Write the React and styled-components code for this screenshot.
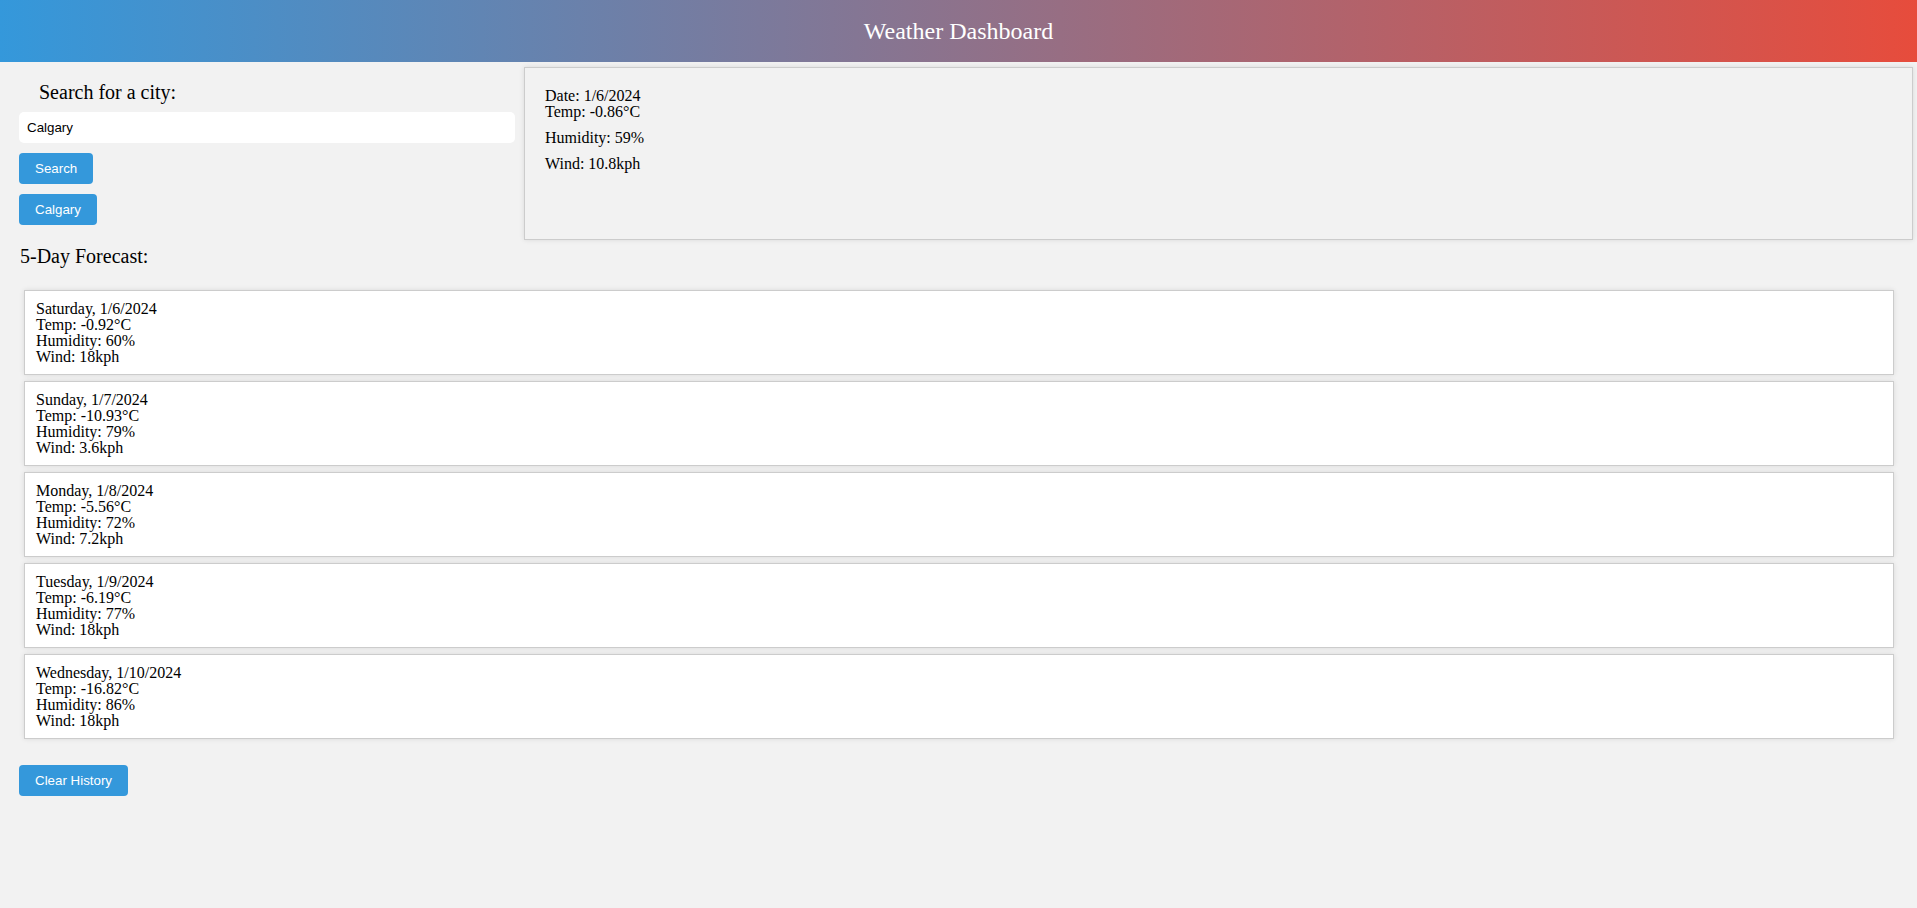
import React from "react";
import styled, { createGlobalStyle } from "styled-components";

const Global = createGlobalStyle`
  html, body {
    margin: 0;
    padding: 0;
    background: #f2f2f2;
    font-family: "Liberation Serif", "Times New Roman", serif;
    color: #000;
  }
  * { box-sizing: border-box; }
`;

const Header = styled.header`
  height: 62px;
  display: flex;
  align-items: center;
  justify-content: center;
  background: linear-gradient(to right, #3498db, #e74c3c);
`;

const Title = styled.h1`
  margin: 0;
  font-size: 24px;
  font-weight: normal;
  color: #fff;
  line-height: 28px;
`;

const Main = styled.main`
  padding: 5px 4px 0 19px;
`;

const TopRow = styled.div`
  display: flex;
  gap: 9px;
  align-items: flex-start;
`;

const SearchColumn = styled.section`
  width: 496px;
  display: flex;
  flex-direction: column;
  align-items: flex-start;
`;

const SearchLabel = styled.label`
  display: block;
  margin: 14px 0 8px 20px;
  font-size: 20px;
  line-height: 23px;
`;

const CityInput = styled.input`
  width: 100%;
  height: 31px;
  border: none;
  border-radius: 5px;
  background: #fff;
  padding: 8px;
  font-family: "Liberation Sans", Arial, sans-serif;
  font-size: 13.33px;
  line-height: 15px;
  color: #000;
  outline: none;
`;

const ActionButton = styled.button`
  margin-top: ${(p) => p.$top ?? 10}px;
  height: 31px;
  padding: 0 16px;
  border: none;
  border-radius: 4px;
  background: #3498db;
  color: #fff;
  font-family: "Liberation Sans", Arial, sans-serif;
  font-size: 13.33px;
  line-height: 15px;
  cursor: pointer;
`;

const CurrentPanel = styled.section`
  flex: 1;
  height: 173px;
  border: 1px solid #ccc;
  box-shadow: 0 0 5px rgba(0, 0, 0, 0.1);
  padding: 20px;
  font-size: 16px;
  line-height: 16px;
`;

const PanelLine = styled.p`
  margin: ${(p) => (p.$first ? 0 : "10px 0 0")};
`;

const SectionTitle = styled.h2`
  margin: 5px 0 0 1px;
  font-size: 20px;
  font-weight: normal;
  line-height: 23px;
`;

const ForecastList = styled.div`
  margin-top: 22px;
  padding: 0 19px 0 5px;
  display: flex;
  flex-direction: column;
  gap: 6px;
`;

const ForecastCard = styled.div`
  height: 85px;
  background: #fff;
  border: 1px solid #ccc;
  box-shadow: 0 0 5px rgba(0, 0, 0, 0.1);
  padding: 10px 10px 0 11px;
  font-size: 16px;
  line-height: 16px;
`;

const CardLine = styled.div``;

const forecast = [
  { day: "Saturday, 1/6/2024", temp: "-0.92", hum: "60", wind: "18" },
  { day: "Sunday, 1/7/2024", temp: "-10.93", hum: "79", wind: "3.6" },
  { day: "Monday, 1/8/2024", temp: "-5.56", hum: "72", wind: "7.2" },
  { day: "Tuesday, 1/9/2024", temp: "-6.19", hum: "77", wind: "18" },
  { day: "Wednesday, 1/10/2024", temp: "-16.82", hum: "86", wind: "18" },
];

export default function App() {
  return (
    <>
      <Global />
      <Header>
        <Title>Weather Dashboard</Title>
      </Header>
      <Main>
        <TopRow>
          <SearchColumn>
            <SearchLabel htmlFor="city">Search for a city:</SearchLabel>
            <CityInput id="city" defaultValue="Calgary" />
            <ActionButton>Search</ActionButton>
            <ActionButton>Calgary</ActionButton>
          </SearchColumn>
          <CurrentPanel>
            <PanelLine $first>
              Date: 1/6/2024
              <br />
              Temp: -0.86°C
            </PanelLine>
            <PanelLine>Humidity: 59%</PanelLine>
            <PanelLine>Wind: 10.8kph</PanelLine>
          </CurrentPanel>
        </TopRow>
        <SectionTitle>5-Day Forecast:</SectionTitle>
        <ForecastList>
          {forecast.map((f) => (
            <ForecastCard key={f.day}>
              <CardLine>{f.day}</CardLine>
              <CardLine>Temp: {f.temp}°C</CardLine>
              <CardLine>Humidity: {f.hum}%</CardLine>
              <CardLine>Wind: {f.wind}kph</CardLine>
            </ForecastCard>
          ))}
        </ForecastList>
        <ActionButton $top={26}>Clear History</ActionButton>
      </Main>
    </>
  );
}
